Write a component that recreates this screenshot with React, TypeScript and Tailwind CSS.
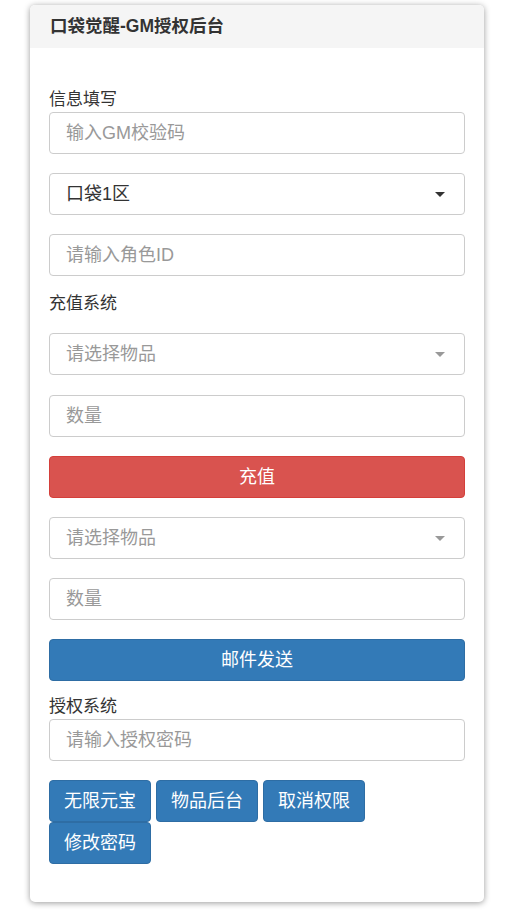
import React from 'react';

const FONT = { fontFamily: '"Liberation Sans", "Noto Sans CJK SC", sans-serif' };

function TextInput({ placeholder }: { placeholder: string }) {
  return (
    <input
      type="text"
      placeholder={placeholder}
      className="block w-full h-[42px] rounded-[4px] border border-[#ccc] bg-white px-[16px] text-[18px] text-[#333] placeholder:text-[#999] outline-none"
    />
  );
}

function SelectBox({ value, placeholder }: { value?: string; placeholder?: string }) {
  return (
    <div className="relative flex items-center w-full h-[42px] rounded-[4px] border border-[#ccc] bg-white px-[16px] text-[18px]">
      <span className={value ? 'text-[#333]' : 'text-[#999]'}>{value ?? placeholder}</span>
      {/* caret */}
      <span
        className={[
          'absolute right-[19px] top-[18px] h-0 w-0 border-x-[5px] border-t-[5px] border-x-transparent',
          value ? 'border-t-[#333]' : 'border-t-[#999]',
        ].join(' ')}
      />
    </div>
  );
}

function Btn({ children, color }: { children: React.ReactNode; color: 'red' | 'blue' }) {
  return (
    <button
      className={[
        'block w-full h-[42px] rounded-[4px] border text-[18px] text-white',
        color === 'red' ? 'bg-[#d9534f] border-[#d43f3a]' : 'bg-[#337ab7] border-[#2e6da4]',
      ].join(' ')}
    >
      {children}
    </button>
  );
}

function SmallBtn({ children }: { children: React.ReactNode }) {
  return (
    <button className="h-[42px] w-[102px] rounded-[4px] border border-[#2e6da4] bg-[#337ab7] text-[18px] text-white">
      {children}
    </button>
  );
}

export default function App() {
  return (
    <div className="min-h-[911px] bg-white pt-[5px]" style={FONT}>
      <div className="ml-[30px] w-[454px] rounded-[5px] bg-white shadow-[0_1px_6px_rgba(0,0,0,0.4)] overflow-hidden">
        {/* Panel heading */}
        <div className="h-[43px] bg-[#f5f5f5] px-[20px] flex items-center">
          <h3 className="text-[17.5px] font-bold text-[#333]">口袋觉醒-GM授权后台</h3>
        </div>

        {/* Panel body */}
        <div className="px-[19px] pt-[40px] pb-[38px] text-[#333]">
          <p className="text-[17px] leading-[24px]">信息填写</p>
          <TextInput placeholder="输入GM校验码" />
          <div className="mt-[19px]">
            <SelectBox value="口袋1区" />
          </div>
          <div className="mt-[19px]">
            <TextInput placeholder="请输入角色ID" />
          </div>

          <p className="mt-[16px] text-[17px] leading-[24px]">充值系统</p>
          <div className="mt-[17px]">
            <SelectBox placeholder="请选择物品" />
          </div>
          <div className="mt-[20px]">
            <TextInput placeholder="数量" />
          </div>
          <div className="mt-[19px]">
            <Btn color="red">充值</Btn>
          </div>
          <div className="mt-[19px]">
            <SelectBox placeholder="请选择物品" />
          </div>
          <div className="mt-[19px]">
            <TextInput placeholder="数量" />
          </div>
          <div className="mt-[19px]">
            <Btn color="blue">邮件发送</Btn>
          </div>

          <p className="mt-[14px] text-[17px] leading-[24px]">授权系统</p>
          <TextInput placeholder="请输入授权密码" />

          <div className="mt-[19px] flex flex-wrap gap-x-[5px] w-[320px]">
            <SmallBtn>无限元宝</SmallBtn>
            <SmallBtn>物品后台</SmallBtn>
            <SmallBtn>取消权限</SmallBtn>
            <SmallBtn>修改密码</SmallBtn>
          </div>
        </div>
      </div>
    </div>
  );
}
